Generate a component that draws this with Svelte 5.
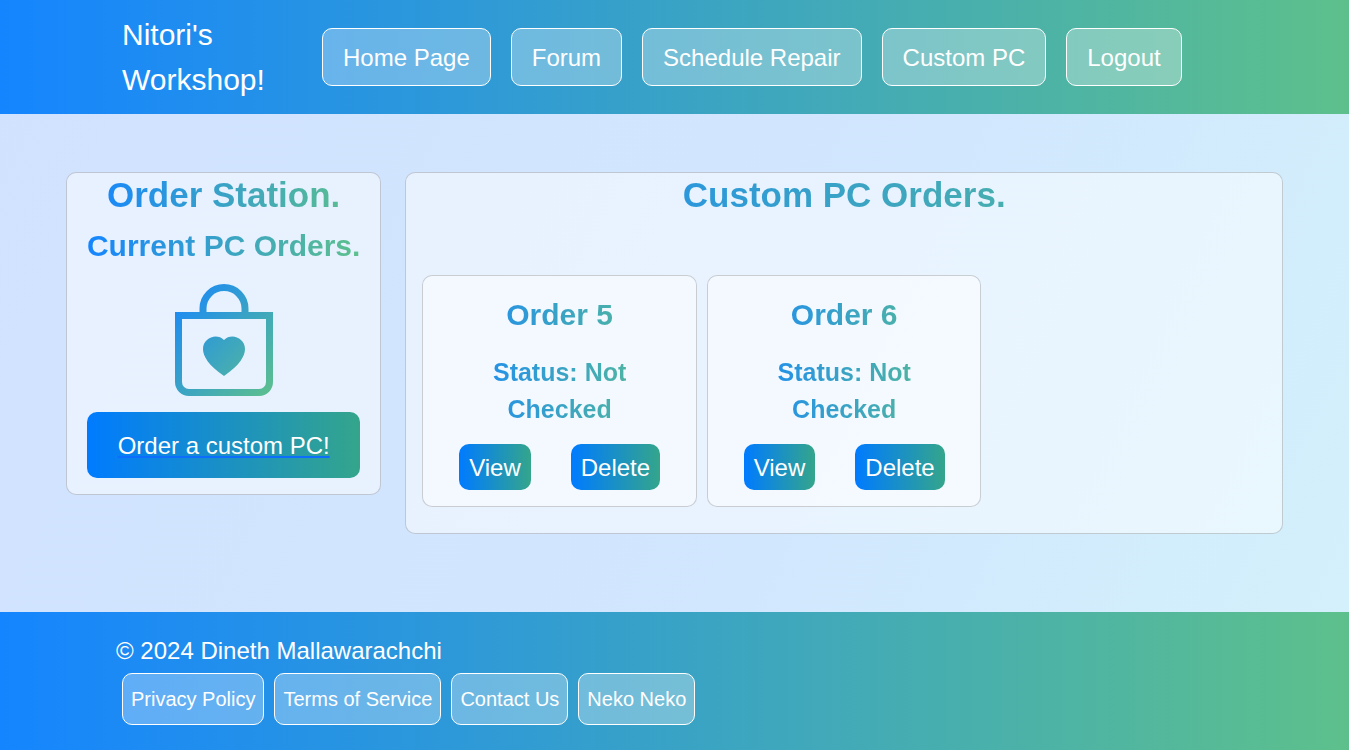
<script>
  const navLinks = ['Home Page', 'Forum', 'Schedule Repair', 'Custom PC', 'Logout'];
  const footerLinks = ['Privacy Policy', 'Terms of Service', 'Contact Us', 'Neko Neko'];
  const orders = [
    { id: 5, status: 'Not Checked' },
    { id: 6, status: 'Not Checked' }
  ];
</script>

<div class="page">
  <header class="bar">
    <div class="bar-inner header-inner">
      <a class="brand" href="#home">Nitori's Workshop!</a>
      <nav class="nav" aria-label="Main">
        {#each navLinks as label}
          <a class="glass nav-link" href="#nav">{label}</a>
        {/each}
      </nav>
    </div>
  </header>

  <main class="main">
    <section class="panel station">
      <h1 class="title gradient-text">Order Station.</h1>
      <h2 class="subtitle gradient-text">Current PC Orders.</h2>
      <svg class="bag" viewBox="0 0 16 16" aria-hidden="true">
        <defs>
          <linearGradient id="bag-fill" x1="0" y1="0" x2="1" y2="1">
            <stop offset="0" stop-color="#1585ff" />
            <stop offset="1" stop-color="#5dc08c" />
          </linearGradient>
        </defs>
        <path
          fill="url(#bag-fill)"
          fill-rule="evenodd"
          d="M10.5 3.5a2.5 2.5 0 0 0-5 0V4h5v-.5Zm1 0V4H15v10a2 2 0 0 1-2 2H3a2 2 0 0 1-2-2V4h3.5v-.5a3.5 3.5 0 1 1 7 0ZM14 14V5H2v9a1 1 0 0 0 1 1h10a1 1 0 0 0 1-1ZM8 7.993c1.664-1.711 5.825 1.283 0 5.132-5.825-3.85-1.664-6.843 0-5.132Z"
        />
      </svg>
      <a class="action action-large" href="#order">Order a custom PC!</a>
    </section>

    <section class="panel orders">
      <h2 class="title gradient-text">Custom PC Orders.</h2>
      <div class="order-grid">
        {#each orders as order}
          <article class="panel order">
            <h3 class="subtitle gradient-text">Order {order.id}</h3>
            <p class="status gradient-text">Status: {order.status}</p>
            <div class="order-actions">
              <button class="action" type="button">View</button>
              <button class="action" type="button">Delete</button>
            </div>
          </article>
        {/each}
      </div>
    </section>
  </main>

  <footer class="bar">
    <div class="bar-inner footer-inner">
      <p class="copyright">© 2024 Dineth Mallawarachchi</p>
      <nav class="footer-links" aria-label="Footer">
        {#each footerLinks as label}
          <a class="glass footer-link" href="#footer">{label}</a>
        {/each}
      </nav>
    </div>
  </footer>
</div>

<style>
  :global(body) {
    margin: 0;
  }

  .page,
  .page * {
    box-sizing: border-box;
  }

  .page {
    display: flex;
    flex-direction: column;
    min-height: 100vh;
    font-family: 'Liberation Sans', Arial, sans-serif;
    font-size: 24px;
    line-height: 36px;
    color: #fff;
    background: linear-gradient(115deg, #d1e2ff, #d1e7fe 60%, #d3f1fb);
  }

  h1,
  h2,
  h3,
  p {
    margin: 0;
  }

  .bar {
    background: linear-gradient(90deg, #1585ff, #5dc08c);
  }

  .bar-inner {
    max-width: 1141px;
    margin: 0 auto;
  }

  .header-inner {
    display: flex;
    align-items: center;
    padding: 12px 18px;
  }

  .brand {
    flex: 0 0 200px;
    padding-right: 40px;
    font-size: 30px;
    line-height: 45px;
    color: #fff;
    text-decoration: none;
  }

  .nav {
    display: flex;
    flex-wrap: wrap;
    gap: 20px;
  }

  .glass {
    border: 1px solid #fff;
    border-radius: 10px;
    background: rgba(255, 255, 255, 0.3);
    color: #fff;
    text-decoration: none;
  }

  .nav-link {
    padding: 11px 20px 9px;
  }

  .main {
    flex: 1;
    display: flex;
    align-items: flex-start;
    gap: 24px;
    width: 92%;
    margin: 0 auto;
    padding: 58px 12px 78px;
    text-align: center;
  }

  .panel {
    border: 1px solid rgba(0, 0, 0, 0.175);
    border-radius: 10px;
    background: rgba(255, 255, 255, 0.5);
  }

  .gradient-text {
    background: linear-gradient(90deg, #1585ff, #5dc08c);
    background-clip: text;
    -webkit-background-clip: text;
    color: transparent;
    font-weight: 700;
  }

  .title {
    font-size: 35px;
    line-height: 44px;
  }

  .subtitle {
    font-size: 30px;
    line-height: 38px;
  }

  .station {
    flex: none;
    display: flex;
    flex-direction: column;
    padding: 0 20px 16px;
  }

  .station .subtitle {
    margin-top: 10px;
  }

  .bag {
    width: 112px;
    height: 112px;
    margin: 19px auto 16px;
  }

  .action {
    padding: 6px 10px 4px;
    border: 0;
    border-radius: 10px;
    background: linear-gradient(90deg, #007bff, #34a58b);
    color: #fff;
    font: inherit;
    cursor: pointer;
  }

  .action-large {
    padding: 16px 30px 14px;
    text-decoration: underline;
    text-decoration-color: #0d6efd;
  }

  .orders {
    flex: 1;
    padding: 0 16px 26px;
  }

  .order-grid {
    display: grid;
    grid-template-columns: repeat(3, 1fr);
    gap: 10px;
    margin-top: 58px;
  }

  .order {
    padding: 20px 16px 16px;
  }

  .status {
    margin: 20px 0 16px;
    padding: 0 16px;
    font-size: 25px;
    line-height: 37px;
  }

  .order-actions {
    display: flex;
    justify-content: center;
    gap: 40px;
  }

  .footer-inner {
    padding: 21px 12px 25px;
  }

  .footer-links {
    display: flex;
    flex-wrap: wrap;
    gap: 10px;
    margin-top: 4px;
    padding-left: 6px;
  }

  .footer-link {
    padding: 10px 8px;
    font-size: 20px;
    line-height: 30px;
  }
</style>
